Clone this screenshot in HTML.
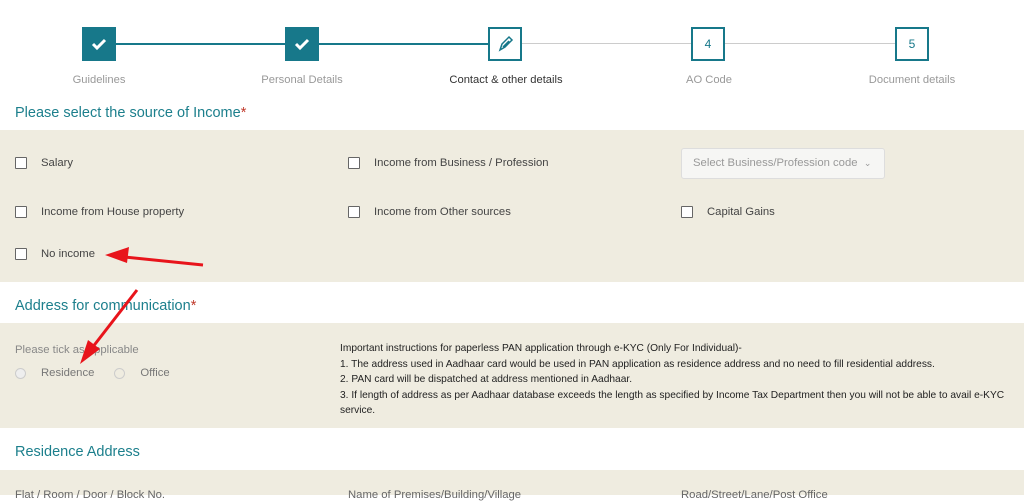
<!DOCTYPE html><html><head><style>
body{margin:0;width:1024px;height:495px;overflow:hidden;background:#fff;font-family:"Liberation Sans",sans-serif;position:relative}
.a{position:absolute}
.box{position:absolute;width:30px;height:30px;top:27px;border:2px solid #17788a;background:#fff;color:#17788a;font-size:12px;text-align:center;line-height:30px}
.done{background:#17788a}
.lbl{position:absolute;top:74px;font-size:11.2px;color:#999;transform:translateX(-50%);white-space:nowrap}
.h{position:absolute;left:15px;font-size:14.5px;color:#1c7f8c}
.h b{color:#c0392b;font-weight:normal}
.panel{position:absolute;left:0;width:1024px;background:#efece0}
.cb{position:absolute;font-size:11.3px;color:#444;display:flex;align-items:center;white-space:nowrap}
.cb i{display:inline-block;width:10px;height:10px;border:1px solid #666;background:#fff;margin-right:14px;border-radius:1px}
</style></head><body>
<div class="a" style="left:116px;top:43px;width:172px;height:2px;background:#17788a"></div>
<div class="a" style="left:319px;top:43px;width:172px;height:2px;background:#17788a"></div>
<div class="a" style="left:522px;top:43px;width:172px;height:1px;background:#ccc"></div>
<div class="a" style="left:725px;top:43px;width:172px;height:1px;background:#ccc"></div>
<div class="box done" style="left:82px"><svg width="30" height="30"><path d="M9 15l4 4 8-8" stroke="#fff" stroke-width="3" fill="none"/></svg></div>
<div class="box done" style="left:285px"><svg width="30" height="30"><path d="M9 15l4 4 8-8" stroke="#fff" stroke-width="3" fill="none"/></svg></div>
<div class="box" style="left:488px"><svg width="30" height="30"><path d="M10 21l2-6 7-7 3 3-7 7z M13 18l6-6" stroke="#17788a" stroke-width="1.5" fill="none"/></svg></div>
<div class="box" style="left:691px">4</div>
<div class="box" style="left:895px">5</div>
<div class="lbl" style="left:99px">Guidelines</div>
<div class="lbl" style="left:302px">Personal Details</div>
<div class="lbl" style="left:506px;color:#333">Contact &amp; other details</div>
<div class="lbl" style="left:709px">AO Code</div>
<div class="lbl" style="left:912px">Document details</div>
<div class="h" style="top:105px">Please select the source of Income<b>*</b></div>
<div class="panel" style="top:130px;height:152px"></div>
<div class="cb" style="left:15px;top:157px"><i></i>Salary</div>
<div class="cb" style="left:348px;top:157px"><i></i>Income from Business / Profession</div>
<div class="a" style="left:681px;top:148px;width:204px;height:31px;border:1px solid #ddd;background:#f6f6f4;border-radius:3px;font-size:11.3px;color:#999;line-height:29px;padding-left:11px;box-sizing:border-box;white-space:nowrap">Select Business/Profession code &nbsp;<span style="font-size:9px">&#8964;</span></div>
<div class="cb" style="left:15px;top:206px"><i></i>Income from House property</div>
<div class="cb" style="left:348px;top:206px"><i></i>Income from Other sources</div>
<div class="cb" style="left:681px;top:206px"><i></i>Capital Gains</div>
<div class="cb" style="left:15px;top:248px"><i></i>No income</div>
<div class="h" style="top:298px">Address for communication<b>*</b></div>
<div class="panel" style="top:323px;height:105px"></div>
<div class="a" style="left:15px;top:344px;font-size:11.3px;color:#888">Please tick as applicable</div>
<div class="a" style="left:15px;top:367px;font-size:11.3px;color:#777;display:flex;align-items:center"><span style="width:9px;height:9px;border:1px solid #ccc;border-radius:50%;margin-right:15px;background:#eee"></span>Residence<span style="width:9px;height:9px;border:1px solid #ccc;border-radius:50%;margin:0 15px 0 20px"></span>Office</div>
<div class="a" style="left:340px;top:341px;font-size:10.2px;color:#222;line-height:15.5px;width:672px">Important instructions for paperless PAN application through e-KYC (Only For Individual)-<br>1. The address used in Aadhaar card would be used in PAN application as residence address and no need to fill residential address.<br>2. PAN card will be dispatched at address mentioned in Aadhaar.<br>3. If length of address as per Aadhaar database exceeds the length as specified by Income Tax Department then you will not be able to avail e-KYC service.</div>
<div class="h" style="top:444px">Residence Address</div>
<div class="panel" style="top:470px;height:25px"></div>
<div class="a" style="left:15px;top:489px;font-size:11.3px;color:#666">Flat / Room / Door / Block No.</div>
<div class="a" style="left:348px;top:489px;font-size:11.3px;color:#666">Name of Premises/Building/Village</div>
<div class="a" style="left:681px;top:489px;font-size:11.3px;color:#666">Road/Street/Lane/Post Office</div>
<svg class="a" style="left:0;top:0" width="1024" height="495"><g stroke="#e8141b" stroke-width="3" fill="#e8141b">
<line x1="203" y1="265" x2="125" y2="257"/><path d="M105 255l24-8-2 16z" stroke="none"/>
<line x1="137" y1="290" x2="92" y2="348"/><path d="M80 364l8-24 12 9z" stroke="none"/></g></svg>
</body></html>
